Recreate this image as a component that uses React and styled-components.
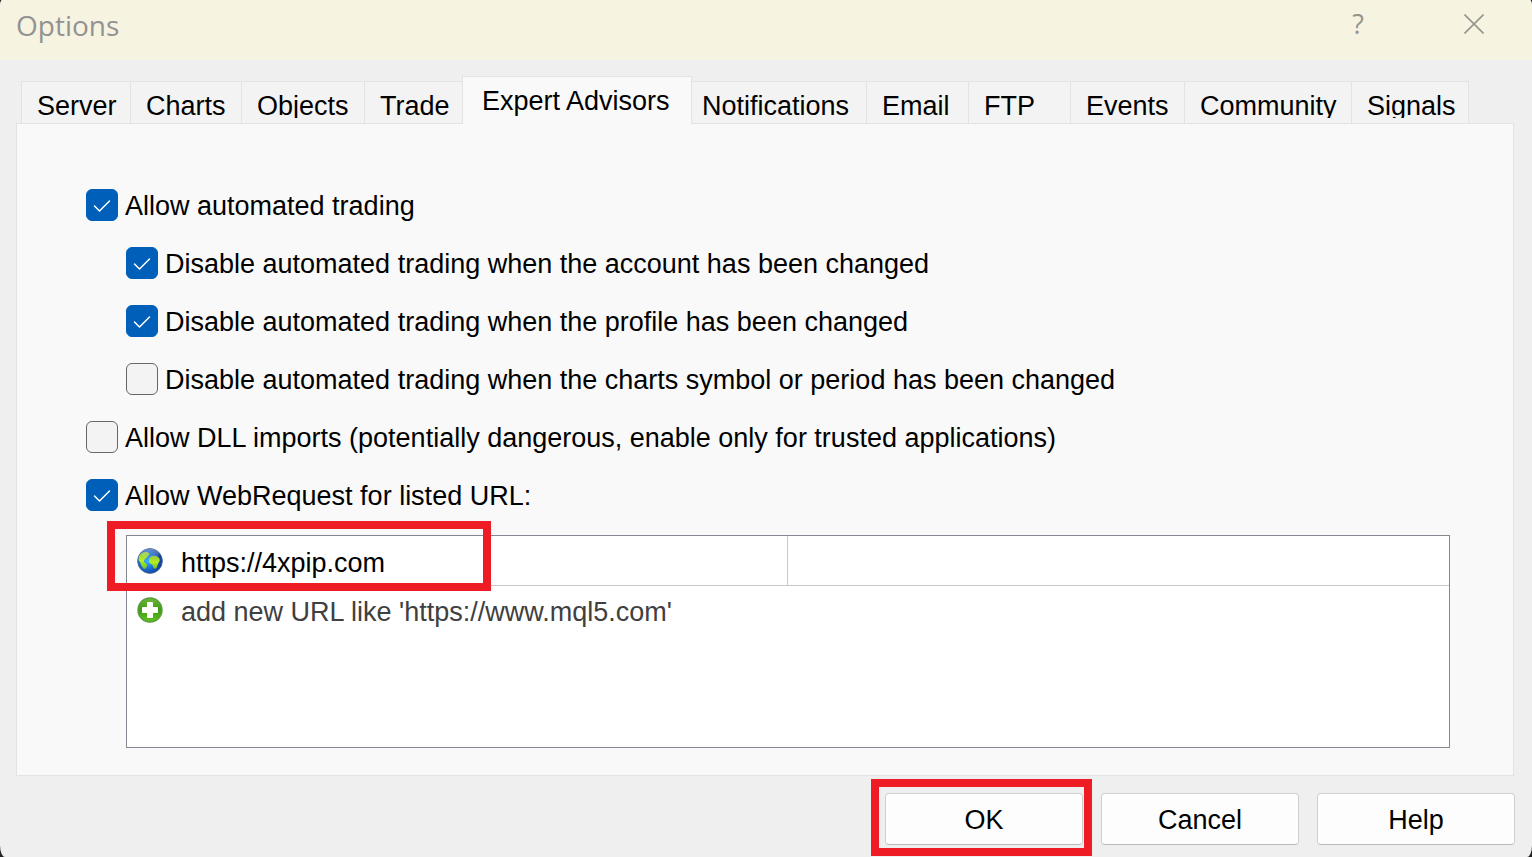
import { useState } from "react";
import styled, { createGlobalStyle } from "styled-components";

const GlobalStyle = createGlobalStyle`
	* {
		box-sizing: border-box;
	}

	body {
		margin: 0;
		background: #222;
		color: #000;
		font-family: "Liberation Sans", Arial, sans-serif;
		font-size: 27px;
		line-height: 32px;
	}

	button {
		font: inherit;
		color: inherit;
	}
`;

const Dialog = styled.main`
	display: flex;
	flex-direction: column;
	min-height: 100vh;
	overflow: hidden;
	background: #efefef;
	border-radius: 2px 2px 5px 5px / 7px 7px 12px 12px;
`;

const TitleBar = styled.header`
	display: flex;
	justify-content: space-between;
	height: 60px;
	padding-left: 16px;
	background: #f7f3e1;
`;

const Title = styled.h1`
	margin: 0;
	padding-top: 5px;
	color: #929292;
	font-family: "Open Sans", "Segoe UI", sans-serif;
	font-size: 28px;
	font-weight: 400;
	line-height: 40px;
`;

const TitleButton = styled.button`
	display: inline-flex;
	align-items: center;
	justify-content: center;
	width: 116px;
	height: 48px;
	padding: 0;
	border: 0;
	background: none;
	color: #96958c;
	font-family: "Open Sans", "Segoe UI", sans-serif;
`;

const TabList = styled.div`
	display: flex;
	align-items: flex-end;
	padding: 16px 21px 0;
`;

const Tab = styled.button`
	flex: 0 1 ${({ $width }) => $width}px;
	display: flex;
	height: ${({ $active }) => ($active ? 48 : 43)}px;
	margin-bottom: -1px;
	padding: ${({ $active }) => ($active ? "8px 0 0 19px" : "11px 0 0 15px")};
	border: 1px solid #e3e3e3;
	border-right-width: ${({ $active }) => ($active ? 1 : 0)}px;
	border-bottom: ${({ $active }) => ($active ? 0 : "1px solid #e3e3e3")};
	background: ${({ $active }) => ($active ? "#f9f9f9" : "#f3f3f3")};
	white-space: nowrap;
	z-index: 1;

	&:last-child {
		border-right-width: 1px;
	}

	${({ $active }) => $active && "& + button { border-left-width: 0; padding-left: 10px; }"}
`;

/* inactive labels lose the tips of their descenders */
const TabLabel = styled.span`
	height: ${({ $active }) => ($active ? 32 : 25)}px;
	line-height: ${({ $active }) => ($active ? 32 : 27)}px;
	overflow: hidden;
`;

const Panel = styled.section`
	flex: 1;
	display: flex;
	flex-direction: column;
	margin: 0 18px 0 16px;
	padding: 65px 63px 27px 69px;
	border: 1px solid #e3e3e3;
	background: #f9f9f9;
`;

const Options = styled.div`
	display: flex;
	flex-direction: column;
	gap: 26px;
`;

const Option = styled.label`
	display: flex;
	align-items: center;
	gap: 7px;
	margin-left: ${({ $nested }) => ($nested ? 40 : 0)}px;
`;

const OptionText = styled.span`
	padding-top: 2px;
	line-height: 30px;
`;

const Tick = styled.span`
	display: grid;
	width: 32px;
	height: 32px;

	& > * {
		grid-area: 1 / 1;
	}

	svg {
		pointer-events: none;
	}
`;

const Checkbox = styled.input`
	appearance: none;
	width: 32px;
	height: 32px;
	margin: 0;
	border: 1px solid #666;
	border-radius: 6px;
	background: #f3f3f3;

	&:checked {
		border-color: #005fb8;
		background: #005fb8;
	}

	&:not(:checked) + svg {
		display: none;
	}
`;

const UrlList = styled.div`
	position: relative;
	flex: 1;
	margin: 24px 0 0 40px;
	border: 1px solid #828790;
	background: #fff;
`;

const UrlTable = styled.table`
	width: 100%;
	table-layout: fixed;
	border-collapse: separate;
	border-spacing: 0;

	td {
		height: 48px;
		padding: 0 0 0 10px;
	}

	tr:first-child td {
		height: 50px;
		border-bottom: 1px solid #c8c8c8;
	}

	tr:first-child td:first-child {
		border-right: 1px solid #c8c8c8;
	}
`;

const UrlCell = styled.div`
	display: flex;
	align-items: center;
	gap: 18px;

	svg {
		flex: none;
	}
`;

const UrlText = styled.span`
	padding-top: 4px;
`;

const AddUrl = styled.button`
	padding: 4px 0 0;
	border: 0;
	background: none;
	color: #404040;
	white-space: nowrap;
`;

const UrlHighlight = styled.div`
	position: absolute;
	top: -15px;
	left: -20px;
	width: 384px;
	height: 70px;
	border: 8px solid #ee1c25;
	pointer-events: none;
`;

const Footer = styled.footer`
	display: flex;
	justify-content: flex-end;
	gap: 18px;
	padding: 17px 17px 12px;
`;

const ButtonSlot = styled.div`
	position: relative;
`;

const ButtonHighlight = styled.div`
	position: absolute;
	inset: -14px -9px -11px -14px;
	border: 8px solid #ee1c25;
	pointer-events: none;
`;

const Button = styled.button`
	width: 198px;
	height: 52px;
	padding: 2px 0 0;
	border: 1px solid #d0d0d0;
	border-bottom-color: #bababa;
	border-radius: 4px;
	background: #fdfdfd;
`;

const tabs = [
	{ name: "Server", width: 109 },
	{ name: "Charts", width: 111 },
	{ name: "Objects", width: 123 },
	{ name: "Trade", width: 98 },
	{ name: "Expert Advisors", width: 230 },
	{ name: "Notifications", width: 174 },
	{ name: "Email", width: 102 },
	{ name: "FTP", width: 102 },
	{ name: "Events", width: 114 },
	{ name: "Community", width: 167 },
	{ name: "Signals", width: 118 },
];

const options = [
	{ text: "Allow automated trading", checked: true },
	{
		text: "Disable automated trading when the account has been changed",
		checked: true,
		nested: true,
	},
	{
		text: "Disable automated trading when the profile has been changed",
		checked: true,
		nested: true,
	},
	{
		text: "Disable automated trading when the charts symbol or period has been changed",
		checked: false,
		nested: true,
	},
	{
		text: "Allow DLL imports (potentially dangerous, enable only for trusted applications)",
		checked: false,
	},
	{ text: "Allow WebRequest for listed URL:", checked: true },
];

const CloseIcon = () => (
	<svg width="20" height="20" viewBox="0 0 20 20" aria-hidden="true">
		<path d="M0.5 0.5L19.5 19.5M19.5 0.5L0.5 19.5" stroke="currentColor" strokeWidth="1.6" />
	</svg>
);

const CheckIcon = () => (
	<svg width="32" height="32" viewBox="0 0 32 32" fill="none" aria-hidden="true">
		<path
			d="M8.5 17L13.5 22L23.5 12"
			stroke="#fff"
			strokeWidth="1.5"
			strokeLinecap="round"
			strokeLinejoin="round"
		/>
	</svg>
);

const GlobeIcon = () => (
	<svg width="26" height="26" viewBox="0 0 26 26" aria-hidden="true">
		<defs>
			<radialGradient id="sea" cx="0.4" cy="0.5" r="0.6">
				<stop offset="0" stopColor="#39b4ff" />
				<stop offset="0.5" stopColor="#1a6fd8" />
				<stop offset="1" stopColor="#14388c" />
			</radialGradient>
			<linearGradient id="land" x1="0" y1="0" x2="0" y2="1">
				<stop offset="0" stopColor="#8fc03c" />
				<stop offset="0.5" stopColor="#b8f024" />
				<stop offset="1" stopColor="#6fbe1e" />
			</linearGradient>
			<linearGradient id="shine" x1="0" y1="0" x2="0" y2="1">
				<stop offset="0" stopColor="#fff" stopOpacity="0.35" />
				<stop offset="1" stopColor="#fff" stopOpacity="0" />
			</linearGradient>
		</defs>
		<circle cx="13" cy="13" r="12.4" fill="url(#sea)" stroke="#4a6a9a" strokeWidth="0.8" />
		<path
			d="M2 8C4 5 6 4 9 4C11 4 13 5 12 7L10 9C9 11 7 11 7 13C7 15 9 15 10 17C10 19 9 21 7 21C5 19 4 17 3.5 15L1.5 12Z"
			fill="url(#land)"
		/>
		<path
			d="M12 11C13 8 16 7 19 8C22 9 24 12 22 14C21 16 20 17 20 19C19 22 16 21 16 18C15 16 13 16 12 14Z"
			fill="url(#land)"
		/>
		<ellipse cx="13" cy="6" rx="9" ry="5" fill="url(#shine)" />
	</svg>
);

const AddIcon = () => (
	<svg width="26" height="26" viewBox="0 0 26 26" aria-hidden="true">
		<defs>
			<linearGradient id="leaf" x1="0" y1="0" x2="0" y2="1">
				<stop offset="0" stopColor="#6cb83c" />
				<stop offset="0.5" stopColor="#3c9c14" />
				<stop offset="1" stopColor="#62c420" />
			</linearGradient>
		</defs>
		<circle cx="13" cy="13" r="12" fill="url(#leaf)" stroke="#5a9a3c" strokeWidth="1.4" />
		<path
			d="M10.5 5.5H15.5V10.5H20.5V15.5H15.5V20.5H10.5V15.5H5.5V10.5H10.5Z"
			fill="#fff"
			stroke="#fff"
			strokeLinejoin="round"
		/>
	</svg>
);

export default function App() {
	const [active, setActive] = useState("Expert Advisors");

	return (
		<>
			<GlobalStyle />
			<Dialog>
				<TitleBar>
					<Title>Options</Title>
					<div>
						<TitleButton type="button">?</TitleButton>
						<TitleButton type="button" aria-label="Close">
							<CloseIcon />
						</TitleButton>
					</div>
				</TitleBar>

				<TabList role="tablist">
					{tabs.map(({ name, width }) => (
						<Tab
							key={name}
							type="button"
							role="tab"
							aria-selected={name === active}
							$active={name === active}
							$width={width}
							onClick={() => setActive(name)}
						>
							<TabLabel $active={name === active}>{name}</TabLabel>
						</Tab>
					))}
				</TabList>

				<Panel>
					<Options>
						{options.map(({ text, checked, nested }) => (
							<Option key={text} $nested={nested}>
								<Tick>
									<Checkbox type="checkbox" defaultChecked={checked} />
									<CheckIcon />
								</Tick>
								<OptionText>{text}</OptionText>
							</Option>
						))}
					</Options>

					<UrlList>
						<UrlTable>
							<tbody>
								<tr>
									<td>
										<UrlCell>
											<GlobeIcon />
											<UrlText>https://4xpip.com</UrlText>
										</UrlCell>
									</td>
									<td />
								</tr>
								<tr>
									<td>
										<UrlCell>
											<AddIcon />
											<AddUrl type="button">
												add new URL like 'https://www.mql5.com'
											</AddUrl>
										</UrlCell>
									</td>
									<td />
								</tr>
							</tbody>
						</UrlTable>
						<UrlHighlight />
					</UrlList>
				</Panel>

				<Footer>
					<ButtonSlot>
						<Button type="button">OK</Button>
						<ButtonHighlight />
					</ButtonSlot>
					<Button type="button">Cancel</Button>
					<Button type="button">Help</Button>
				</Footer>
			</Dialog>
		</>
	);
}
